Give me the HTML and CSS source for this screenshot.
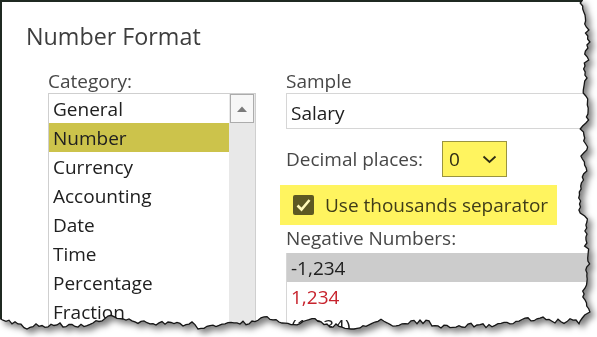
FILE: index.html
```html
<!DOCTYPE html>
<html lang="en">
<head>
  <meta charset="UTF-8">
  <meta name="viewport" content="width=device-width, initial-scale=1.0">
  <title>Number Format</title>
  <link rel="stylesheet" href="styles.css">
</head>
<body>
  <div class="sheet">
    <div class="paper" id="paper">
      <h1 class="title">Number Format</h1>
      <div class="columns">
        <div class="col-left">
          <div class="label">Category:</div>
          <div class="listbox">
            <ul class="items">
              <li>General</li>
              <li class="selected">Number</li>
              <li>Currency</li>
              <li>Accounting</li>
              <li>Date</li>
              <li>Time</li>
              <li>Percentage</li>
              <li>Fraction</li>
            </ul>
            <div class="scrollbar">
              <div class="scroll-btn">
                <svg width="10" height="6" viewBox="0 0 10 6"><polygon points="0,6 5,0.5 10,6" fill="#7b7b7b"/></svg>
              </div>
            </div>
          </div>
        </div>

        <div class="col-right">
          <div class="label">Sample</div>
          <div class="sample">Salary</div>

          <div class="decimals">
            <span class="label">Decimal places:</span>
            <div class="dropdown">
              <span>0</span>
              <svg width="15" height="9" viewBox="0 0 15 9"><polyline points="1.5,1.5 7.5,7 13.5,1.5" fill="none" stroke="#2e2c14" stroke-width="1.8"/></svg>
            </div>
          </div>

          <div class="thousands">
            <span class="checkbox">
              <svg width="21" height="20" viewBox="0 0 21 20"><polyline points="4.5,10.5 8.5,14.5 16.5,5" fill="none" stroke="#fff9b8" stroke-width="2.6"/></svg>
            </span>
            <span>Use thousands separator</span>
          </div>

          <div class="label neg-label">Negative Numbers:</div>
          <ul class="negatives">
            <li class="current">-1,234</li>
            <li class="red">1,234</li>
            <li>(1,234)</li>
          </ul>
        </div>
      </div>
    </div>
    <svg class="tear" width="597" height="337"><polyline id="tearLine" fill="none" stroke="#161616" stroke-width="1.3"/></svg>
  </div>

  <script>
    // torn paper edge along the right and bottom sides
    let seed = 7;
    function rand() {
      seed = (seed * 16807) % 2147483647;
      return seed / 2147483647;
    }

    function edge(from, to, base, min, max) {
      const pts = [];
      let walk = 0;
      const step = from < to ? 3 : -3;
      for (let t = from; step > 0 ? t <= to : t >= to; t += step) {
        walk = (walk + (rand() - 0.5) * 6) * 0.82;
        let v = base + walk + (rand() - 0.5) * 2.6;
        v = Math.max(min, Math.min(max, v));
        pts.push([t, Math.round(v * 10) / 10]);
      }
      return pts;
    }

    const right = edge(0, 321, 584, 578, 591).map(p => [p[1], p[0]]);
    const bottom = edge(579, 0, 322, 314, 329);

    const outline = right.concat(bottom);
    const shape = [[0, 0]].concat(outline, [[0, bottom[bottom.length - 1][1]]]);

    document.getElementById('paper').style.clipPath =
      'polygon(' + shape.map(p => p[0] + 'px ' + p[1] + 'px').join(', ') + ')';
    document.getElementById('tearLine').setAttribute('points',
      outline.map(p => p.join(',')).join(' '));
  </script>
</body>
</html>
```

FILE: styles.css
```css
body {
  margin: 0;
  background: #fff;
  font-family: "Open Sans", "Noto Sans", sans-serif;
}
.sheet {
  position: relative;
  width: 597px;
  height: 337px;
  filter: drop-shadow(4px 4px 3px rgba(0, 0, 0, 0.5));
}
.paper {
  box-sizing: border-box;
  width: 597px;
  height: 337px;
  overflow: hidden;
  background: #fff;
  border-top: 2px solid #1f2921;
  border-left: 2px solid #1f2921;
  padding-top: 19px;
}
.tear {
  position: absolute;
  left: 0;
  top: 0;
}
.title {
  margin: 0;
  padding-left: 24px;
  font-size: 23.3px;
  font-weight: normal;
  line-height: 30px;
  color: #3d3d3d;
}
.columns {
  display: flex;
  gap: 30px;
  margin-top: 19px;
  padding-left: 46px;
}
.label {
  font-size: 19px;
  line-height: 23px;
  color: #474747;
}
ul {
  list-style: none;
  margin: 0;
  padding: 0;
}

/* category list */
.col-left {
  width: 208px;
  flex: none;
}
.listbox {
  display: flex;
  height: 260px;
  border: 1px solid #cfcfcf;
}
.items {
  width: 180px;
}
.items li {
  box-sizing: border-box;
  height: 29px;
  padding: 1px 0 0 4px;
  font-size: 19px;
  line-height: 28px;
  color: #202020;
}
.items .selected {
  background: #ccc34b;
}
.scrollbar {
  width: 26px;
  background: #e8e8e8;
}
.scroll-btn {
  display: flex;
  align-items: center;
  justify-content: center;
  height: 27px;
  margin: 0 1px;
  background: #f7f7f7;
  border: 1px solid #acacac;
}

/* right side */
.col-right {
  flex: 1;
}
.sample {
  box-sizing: border-box;
  width: 400px;
  height: 36px;
  padding: 4px 0 0 4px;
  border: 1px solid #d6d6d6;
  font-size: 19px;
  line-height: 30px;
  color: #202020;
}
.decimals {
  display: flex;
  align-items: center;
  gap: 19px;
  margin-top: 12px;
}
.dropdown {
  display: flex;
  align-items: center;
  justify-content: space-between;
  box-sizing: border-box;
  width: 65px;
  height: 36px;
  padding: 0 9px 0 6px;
  background: #fff45f;
  border: 1px solid #9a9440;
  font-size: 19px;
  color: #2e2c14;
}
.thousands {
  display: flex;
  align-items: center;
  gap: 11px;
  box-sizing: border-box;
  width: 277px;
  height: 40px;
  margin: 8px 0 0 -6px;
  padding-left: 13px;
  background: #fff45f;
  font-size: 19px;
  color: #3f3c19;
}
.checkbox {
  display: flex;
  width: 21px;
  height: 20px;
  border-radius: 2px;
  background: #5d5923;
}
.neg-label {
  margin-top: 2px;
}
.negatives {
  width: 400px;
  margin-top: 3px;
  border-left: 1px solid #d6d6d6;
}
.negatives li {
  box-sizing: border-box;
  height: 29px;
  padding: 1px 0 0 4px;
  font-size: 19px;
  line-height: 28px;
  color: #202020;
}
.negatives .current {
  background: #cccccc;
}
.negatives .red {
  color: #c7232d;
}
```
